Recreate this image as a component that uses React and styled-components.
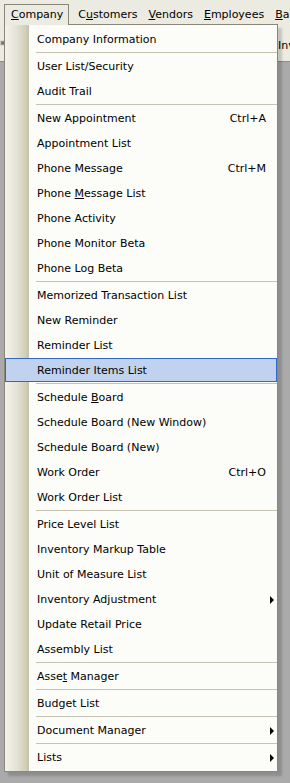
import React from "react";
import styled, { createGlobalStyle } from "styled-components";

const GlobalStyle = createGlobalStyle`
  html, body {
    margin: 0;
    padding: 0;
    background: #aaaaaa;
  }
  * {
    box-sizing: border-box;
  }
`;

const Window = styled.div`
  position: relative;
  width: 290px;
  height: 783px;
  display: flex;
  flex-direction: column;
  overflow: hidden;
  font-family: "DejaVu Sans", Tahoma, sans-serif;
  font-size: 11px;
  color: #000;
`;

const MenuBar = styled.div`
  height: 24px;
  flex: 0 0 24px;
  display: flex;
  align-items: flex-end;
  padding-left: 4px;
  background: #ecebe2;
  white-space: nowrap;
`;

const BarItem = styled.div`
  position: relative;
  height: ${(p) => (p.$open ? "21px" : "20px")};
  margin: 0 ${(p) => (p.$open ? "3px" : "0")} ${(p) => (p.$open ? "-1px" : "0")} 0;
  padding: ${(p) => (p.$open ? "1px 5px 0 6px" : "2px 5px 0 6px")};
  line-height: 18px;
  border: ${(p) => (p.$open ? "1px solid #8a867a" : "none")};
  border-bottom: none;
  background: #ecebe2;
  z-index: ${(p) => (p.$open ? 3 : 0)};
`;

const Toolbar = styled.div`
  height: 38px;
  flex: 0 0 38px;
  display: grid;
  grid-template-columns: 4px 274px auto;
  align-items: center;
  background: #ecebe2;
  border-bottom: 1px solid #8f8d84;
  white-space: nowrap;
  overflow: hidden;
`;

const ToolIcon = styled.div`
  display: flex;
  justify-content: flex-end;
  overflow: hidden;
  width: 4px;
  height: 26px;
`;

const ToolLabel = styled.span`
  grid-column: 3;
  padding-top: 6px;
`;

const Workspace = styled.div`
  flex: 1;
  background: #aaaaaa;
`;

const Popup = styled.div`
  position: absolute;
  top: 24px;
  left: 4px;
  width: 274px;
  padding: 2px 0 1px;
  border: 1px solid #8a867a;
  background: linear-gradient(
      to right,
      #f4f3ec 0px,
      #e4e2d4 12px,
      #d2cfbb 20px,
      #c4c1ab 24px,
      #fcfcf9 24px
    );
  box-shadow: 4px 4px 2px rgba(0, 0, 0, 0.16);
  z-index: 2;
`;

const Row = styled.div`
  display: flex;
  align-items: center;
  height: 24px;
  margin-bottom: 1px;
  padding: 2px 2px 0 31px;
  border: 1px solid ${(p) => (p.$active ? "#316ac5" : "transparent")};
  background: ${(p) => (p.$active ? "#c1d2ee" : "transparent")};
  white-space: nowrap;
  line-height: 18px;
`;

const Label = styled.span`
  flex: 1;
`;

const Shortcut = styled.span`
  margin-right: 8px;
`;

const Arrow = styled.span`
  width: 0;
  height: 0;
  margin-top: -1px;
  border-top: 4px solid transparent;
  border-bottom: 4px solid transparent;
  border-left: 4px solid #000;
`;

const Separator = styled.div`
  height: 2px;
  margin-left: 31px;
  border-top: 1px solid #c5c2b2;
`;

const groups = [
  [{ label: "Company Information" }],
  [{ label: "User List/Security" }, { label: "Audit Trail" }],
  [
    { label: "New Appointment", shortcut: "Ctrl+A" },
    { label: "Appointment List" },
    { label: "Phone Message", shortcut: "Ctrl+M" },
    { label: "Phone Message List", key: 6 },
    { label: "Phone Activity" },
    { label: "Phone Monitor Beta" },
    { label: "Phone Log Beta" },
  ],
  [
    { label: "Memorized Transaction List" },
    { label: "New Reminder" },
    { label: "Reminder List" },
    { label: "Reminder Items List", active: true },
  ],
  [
    { label: "Schedule Board", key: 9 },
    { label: "Schedule Board (New Window)" },
    { label: "Schedule Board (New)" },
    { label: "Work Order", shortcut: "Ctrl+O" },
    { label: "Work Order List" },
  ],
  [
    { label: "Price Level List" },
    { label: "Inventory Markup Table" },
    { label: "Unit of Measure List" },
    { label: "Inventory Adjustment", sub: true },
    { label: "Update Retail Price" },
    { label: "Assembly List" },
  ],
  [{ label: "Asset Manager", key: 4 }],
  [{ label: "Budget List" }],
  [{ label: "Document Manager", sub: true }],
  [{ label: "Lists", sub: true }],
];

// underline the access key (index of the letter), like windows menus do
const withKey = (text, i) => {
  if (i === undefined) return text;
  return (
    <>
      {text.slice(0, i)}
      <u>{text[i]}</u>
      {text.slice(i + 1)}
    </>
  );
};

const App = () => {
  return (
    <>
      <GlobalStyle />
      <Window>
        <MenuBar>
          <BarItem $open>
            <u>C</u>ompany
          </BarItem>
          <BarItem>
            C<u>u</u>stomers
          </BarItem>
          <BarItem>
            <u>V</u>endors
          </BarItem>
          <BarItem>
            <u>E</u>mployees
          </BarItem>
          <BarItem>
            <u>B</u>anking
          </BarItem>
        </MenuBar>
        <Toolbar>
          <ToolIcon>
            <svg width="16" height="26" viewBox="0 0 16 26">
              <rect x="2" y="4" width="14" height="18" fill="#9a9f92" />
              <rect x="6" y="8" width="10" height="10" fill="#6f7a6a" />
            </svg>
          </ToolIcon>
          <ToolLabel>Inventory</ToolLabel>
        </Toolbar>
        <Workspace />
        <Popup>
          {groups.map((group, gi) => (
            <React.Fragment key={gi}>
              {gi > 0 && <Separator />}
              {group.map((item) => (
                <Row key={item.label} $active={item.active}>
                  <Label>{withKey(item.label, item.key)}</Label>
                  {item.shortcut && <Shortcut>{item.shortcut}</Shortcut>}
                  {item.sub && <Arrow />}
                </Row>
              ))}
            </React.Fragment>
          ))}
        </Popup>
      </Window>
    </>
  );
};

export default App;
